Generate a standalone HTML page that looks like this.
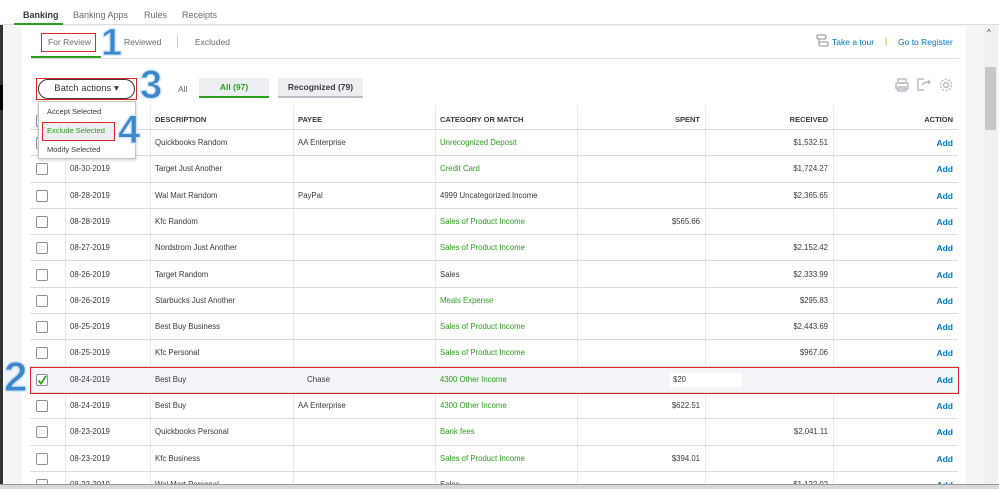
<!DOCTYPE html>
<html><head><meta charset="utf-8"><style>
*{box-sizing:border-box;margin:0;padding:0}
html,body{width:999px;height:489px;overflow:hidden}
body{background:#f4f5f8;font-family:"Liberation Sans",sans-serif;position:relative;color:#393a3d}
.a{position:absolute}
.top{left:0;top:0;width:999px;height:25px;background:#fff;border-bottom:1px solid #dcdcdc}
.top span{position:absolute;top:10px;font-size:9px;color:#6b6c72}
.panel{left:22px;top:26px;width:944px;height:463px;background:#fff}
.row{position:absolute;left:30px;width:928px;height:26.3px;border-bottom:1px solid #dcdcdc;font-size:7.8px;line-height:26px}
.row div{position:absolute;top:0;height:100%}
.row div.cb{position:absolute;left:6px;top:7px;width:12px;height:12px;border:1px solid #8d9096;border-radius:2px;background:#fff}
.vl{position:absolute;top:106px;bottom:0;width:1px;background:#e8e8ea}
.g{color:#2ca01c}
.row div.add{color:#0077c5;font-weight:bold;font-size:8.5px;right:5px}
.num{font-family:"Liberation Sans",sans-serif;font-weight:bold;color:#3d86c9;-webkit-text-stroke:1px #cfe4f7;text-shadow:0 0 2px #9cc7ee}
</style></head><body>
<div class="a" style="left:0;top:0;width:3px;height:489px;background:#333"></div>
<div class="a" style="left:0;top:85px;width:3px;height:25px;background:#000"></div>
<div class="a top">
<span style="left:23px;color:#393a3d;font-weight:bold">Banking</span>
<span style="left:73px">Banking Apps</span>
<span style="left:144px">Rules</span>
<span style="left:182px">Receipts</span>
<div class="a" style="left:14px;top:23px;width:49px;height:2px;background:#2ca01c"></div>
</div>
<div class="a panel"></div>
<div class="a" style="left:31px;top:58px;width:928px;height:1px;background:#dcdcdc"></div>
<div class="a" style="left:31px;top:56px;width:70px;height:2px;background:#2ca01c"></div>
<div class="a" style="left:41px;top:33px;width:55px;height:19px;border:1px solid #e02a2a"></div>
<div class="a" style="left:48px;top:37px;font-size:8.5px;color:#6b6c72">For Review</div>
<div class="a" style="left:124px;top:37px;font-size:8.5px;color:#6b6c72">Reviewed</div>
<div class="a" style="left:177px;top:35px;width:1px;height:13px;background:#ccc"></div>
<div class="a" style="left:195px;top:37px;font-size:8.5px;color:#6b6c72">Excluded</div>
<div class="a num" style="left:101px;top:22px;font-size:38px">1</div>
<svg class="a" style="left:816px;top:34px" width="13" height="14" viewBox="0 0 13 14"><rect x="1" y="1" width="9" height="4" rx="1.5" fill="none" stroke="#8d9096"/><rect x="3" y="8" width="9" height="4" rx="1.5" fill="none" stroke="#8d9096"/><path d="M3 5v3" stroke="#8d9096"/></svg>
<div class="a" style="left:832px;top:37px;font-size:8.5px;color:#0077c5">Take a tour</div>
<div class="a" style="left:885px;top:36px;font-size:8.5px;color:#c8a000">|</div>
<div class="a" style="left:898px;top:37px;font-size:8.5px;color:#0077c5">Go to Register</div>
<div class="a" style="left:36px;top:78px;width:101px;height:22px;border:1.5px solid #e02a2a"></div>
<div class="a" style="left:38px;top:79px;width:97px;height:20px;border:1.5px solid #393a3d;border-radius:10px;background:#fff;font-size:9.5px;line-height:17px;text-align:center;color:#393a3d">Batch actions ▾</div>
<div class="a num" style="left:140px;top:63px;font-size:40px">3</div>
<div class="a" style="left:178px;top:84px;font-size:8.5px;color:#6b6c72">All</div>
<div class="a" style="left:199px;top:78px;width:70px;height:20px;background:#eceef1;border-bottom:2px solid #2ca01c;font-size:8.5px;line-height:19px;text-align:center;color:#2ca01c;font-weight:bold">All (97)</div>
<div class="a" style="left:278px;top:78px;width:85px;height:20px;background:#eceef1;border-bottom:2px solid #babec5;font-size:8.5px;line-height:19px;text-align:center;color:#393a3d;font-weight:bold">Recognized (79)</div>
<svg class="a" style="left:894px;top:77px" width="62" height="16" viewBox="0 0 62 16">
<g fill="none" stroke="#babec5" stroke-width="1.5">
<rect x="4" y="2" width="8" height="4"/><rect x="2" y="6" width="12" height="6" rx="1"/><rect x="4" y="10" width="8" height="4"/>
<path d="M30 13H24V2h6M28 8c2-3 5-3 8-3M34 3l2 2-2 2"/>
<circle cx="52" cy="8" r="2.5"/><circle cx="52" cy="8" r="5.5" stroke-dasharray="2 1.5"/>
</g></svg>
<div class="vl" style="left:65px"></div><div class="vl" style="left:150px"></div><div class="vl" style="left:293px"></div><div class="vl" style="left:435px"></div><div class="vl" style="left:577px"></div><div class="vl" style="left:705px"></div><div class="vl" style="left:833px"></div>
<div class="row" style="top:106px;height:24px;font-weight:bold;font-size:7.5px;line-height:27px;border-bottom:1px solid #dcdcdc">
<div class="cb" style="top:9px"></div>
<div style="left:125px">DESCRIPTION</div><div style="left:268px">PAYEE</div><div style="left:410px">CATEGORY OR MATCH</div>
<div style="right:258px">SPENT</div><div style="right:130px">RECEIVED</div><div style="right:5px">ACTION</div></div>

<div class="row" style="top:130px"><div class="cb"></div><div style="left:40px">08-30-2019</div><div style="left:125px">Quickbooks Random</div><div style="left:268px">AA Enterprise</div><div class="g" style="left:410px">Unrecognized Deposit</div><div style="right:130px">$1,532.51</div><div class="add">Add</div></div>
<div class="row" style="top:156.3px"><div class="cb"></div><div style="left:40px">08-30-2019</div><div style="left:125px">Target Just Another</div><div class="g" style="left:410px">Credit Card</div><div style="right:130px">$1,724.27</div><div class="add">Add</div></div>
<div class="row" style="top:182.6px"><div class="cb"></div><div style="left:40px">08-28-2019</div><div style="left:125px">Wal Mart Random</div><div style="left:268px">PayPal</div><div style="left:410px">4999 Uncategorized Income</div><div style="right:130px">$2,365.65</div><div class="add">Add</div></div>
<div class="row" style="top:208.9px"><div class="cb"></div><div style="left:40px">08-28-2019</div><div style="left:125px">Kfc Random</div><div class="g" style="left:410px">Sales of Product Income</div><div style="right:258px">$565.66</div><div class="add">Add</div></div>
<div class="row" style="top:235.2px"><div class="cb"></div><div style="left:40px">08-27-2019</div><div style="left:125px">Nordstrom Just Another</div><div class="g" style="left:410px">Sales of Product Income</div><div style="right:130px">$2,152.42</div><div class="add">Add</div></div>
<div class="row" style="top:261.5px"><div class="cb"></div><div style="left:40px">08-26-2019</div><div style="left:125px">Target Random</div><div style="left:410px">Sales</div><div style="right:130px">$2,333.99</div><div class="add">Add</div></div>
<div class="row" style="top:287.8px"><div class="cb"></div><div style="left:40px">08-26-2019</div><div style="left:125px">Starbucks Just Another</div><div class="g" style="left:410px">Meals Expense</div><div style="right:130px">$295.83</div><div class="add">Add</div></div>
<div class="row" style="top:314.1px"><div class="cb"></div><div style="left:40px">08-25-2019</div><div style="left:125px">Best Buy Business</div><div class="g" style="left:410px">Sales of Product Income</div><div style="right:130px">$2,443.69</div><div class="add">Add</div></div>
<div class="row" style="top:340.4px"><div class="cb"></div><div style="left:40px">08-25-2019</div><div style="left:125px">Kfc Personal</div><div class="g" style="left:410px">Sales of Product Income</div><div style="right:130px">$967.06</div><div class="add">Add</div></div>
<div class="row" style="top:366.7px;background:#f4f5f8"><div class="cb"><svg width="10" height="10" style="position:absolute;left:0;top:0"><path d="M1.5 5.5l2.5 3L9 1" stroke="#2ca01c" stroke-width="1.8" fill="none"/></svg></div><div style="left:40px">08-24-2019</div><div style="left:125px">Best Buy</div><div style="left:277px;font-size:8px">Chase</div><div class="g" style="left:410px">4300 Other Income</div><div style="left:640px;top:6px;height:14px;width:72px;background:#fff;line-height:14px;padding-left:3px">$20</div><div class="add">Add</div></div>
<div class="a" style="left:30px;top:367px;width:929px;height:27px;border:1px solid #e02a2a"></div>
<div class="a num" style="left:4px;top:353px;font-size:42px">2</div>
<div class="row" style="top:393px"><div class="cb"></div><div style="left:40px">08-24-2019</div><div style="left:125px">Best Buy</div><div style="left:268px">AA Enterprise</div><div class="g" style="left:410px">4300 Other Income</div><div style="right:258px">$622.51</div><div class="add">Add</div></div>
<div class="row" style="top:419.3px"><div class="cb"></div><div style="left:40px">08-23-2019</div><div style="left:125px">Quickbooks Personal</div><div class="g" style="left:410px">Bank fees</div><div style="right:130px">$2,041.11</div><div class="add">Add</div></div>
<div class="row" style="top:445.6px"><div class="cb"></div><div style="left:40px">08-23-2019</div><div style="left:125px">Kfc Business</div><div class="g" style="left:410px">Sales of Product Income</div><div style="right:258px">$394.01</div><div class="add">Add</div></div>
<div class="row" style="top:471.9px"><div class="cb"></div><div style="left:40px">08-22-2019</div><div style="left:125px">Wal Mart Personal</div><div style="left:410px">Sales</div><div style="right:130px">$1,122.02</div><div class="add">Add</div></div>

<div class="a" style="left:38px;top:101px;width:98px;height:58px;background:#fff;border:1px solid #c4c6ca;box-shadow:0 1px 3px rgba(0,0,0,.2)"></div>
<div class="a" style="left:47px;top:107px;font-size:7.5px">Accept Selected</div>
<div class="a" style="left:42px;top:122px;width:73px;height:19px;background:#eceef1;border:1px solid #e02a2a"></div>
<div class="a g" style="left:47px;top:126px;font-size:7.5px">Exclude Selected</div>
<div class="a" style="left:47px;top:145px;font-size:7.5px">Modify Selected</div>
<div class="a num" style="left:118px;top:108px;font-size:40px">4</div>

<div class="a" style="left:984px;top:26px;width:13px;height:460px;background:#f0f0f0"></div>
<div class="a" style="left:985px;top:67px;width:11px;height:63px;background:#c8c8c8"></div>
<div class="a" style="left:987px;top:28px;font-size:8px;color:#333">^</div>
<div class="a" style="left:0;top:484px;width:999px;height:5px;background:#d8d8d8;border-top:1px solid #999"></div>
</body></html>
